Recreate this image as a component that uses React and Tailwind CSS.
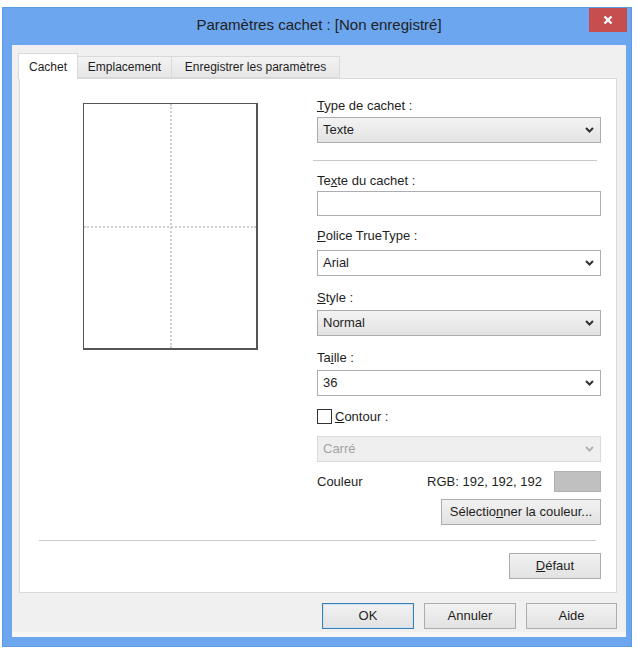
import React from "react";

const font = { fontFamily: '"Liberation Sans", Arial, sans-serif' };

function Chevron({ disabled }) {
  return (
    <svg width="9" height="6" viewBox="0 0 9 6" className="shrink-0">
      <polyline
        points="1,1 4.5,4.5 8,1"
        fill="none"
        stroke={disabled ? "#b4b4b4" : "#333"}
        strokeWidth="2"
      />
    </svg>
  );
}

function Select({ value, variant = "gray", className = "" }) {
  const styles = {
    gray: "bg-gradient-to-b from-[#f3f3f3] to-[#e3e3e3] border-[#acacac] text-[#1e1e1e]",
    white: "bg-white border-[#abadb3] text-[#1e1e1e]",
    disabled: "bg-[#efefef] border-[#d9d9d9] text-[#a3a3a3]",
  };
  return (
    <div
      className={`h-[26px] border flex items-center justify-between pl-[5px] pr-[6px] text-[13px] ${styles[variant]} ${className}`}
    >
      <span>{value}</span>
      <Chevron disabled={variant === "disabled"} />
    </div>
  );
}

function Label({ children, className = "" }) {
  return (
    <div className={`h-[15px] leading-[15px] text-[13px] text-[#1e1e1e] ${className}`}>
      {children}
    </div>
  );
}

function Button({ children, primary, className = "" }) {
  return (
    <div
      className={`h-[26px] flex items-center justify-center text-[13px] text-[#1e1e1e] border bg-gradient-to-b from-[#f2f2f2] to-[#e2e2e2] ${
        primary ? "border-[#3c7fb1] shadow-[inset_0_0_0_1px_#c9e2f5]" : "border-[#acacac]"
      } ${className}`}
    >
      {children}
    </div>
  );
}

export default function App() {
  return (
    <div className="w-[637px] h-[651px] bg-white pt-[7px] pl-[2px]" style={font}>
      <div className="w-[630px] h-[640px] bg-[#6ba6ee] border border-[#5e9ae4] flex flex-col pl-[9px] pr-[5px] pb-[9px]">
        {/* title bar */}
        <div className="h-[37px] relative flex items-center justify-center">
          <span className="text-[15px] text-[#222] pb-[2px]">
            Paramètres cachet : [Non enregistré]
          </span>
          <div className="absolute right-[-1px] top-0 w-[38px] h-[24px] bg-[#c74e4e] flex items-center justify-center">
            <svg width="10" height="10" viewBox="0 0 10 10">
              <path d="M1.5 1.5 L8.5 8.5 M8.5 1.5 L1.5 8.5" stroke="white" strokeWidth="2.4" />
            </svg>
          </div>
        </div>

        {/* client area */}
        <div className="flex-1 bg-[#f0f0f0] border-b-[5px] border-[#f7f7f7] flex flex-col px-[7px] pr-[9px] pt-[8px]">
          {/* tabs */}
          <div className="flex items-end h-[25px] relative z-10">
            <div className="w-[60px] h-[26px] bg-white border border-[#d9d9d9] border-b-0 flex items-center justify-center text-[12px] text-[#1e1e1e] -mb-[1px] ml-[-1px]">
              Cachet
            </div>
            <div className="w-[94px] h-[22px] bg-gradient-to-b from-[#f3f3f3] to-[#e6e6e6] border border-[#d9d9d9] border-l-0 flex items-center justify-center text-[12px] text-[#1e1e1e]">
              Emplacement
            </div>
            <div className="w-[168px] h-[22px] bg-gradient-to-b from-[#f3f3f3] to-[#e6e6e6] border border-[#d9d9d9] border-l-0 flex items-center justify-center text-[12px] text-[#1e1e1e]">
              Enregistrer les paramètres
            </div>
          </div>

          {/* panel */}
          <div className="h-[515px] bg-white border border-[#d9d9d9] flex flex-col">
            <div className="flex">
              {/* preview */}
              <div className="ml-[63px] mt-[24px] w-[175px] h-[247px] border border-[#555] border-r-2 border-b-2 relative">
                <div className="absolute left-[86px] top-0 bottom-0 border-l-2 border-dotted border-[#cfcfcf]" />
                <div className="absolute top-[122px] left-0 right-0 border-t-2 border-dotted border-[#cfcfcf]" />
              </div>

              {/* settings column */}
              <div className="ml-[59px] w-[284px] flex flex-col">
                <Label className="mt-[19px]"><u>T</u>ype de cachet :</Label>
                <Select className="mt-[4px]" value="Texte" />
                <div className="mt-[17px] -ml-[4px] w-[284px] h-[2px] border-t border-[#c8c8c8] border-b border-b-white" />
                <Label className="mt-[11px]">Te<u>x</u>te du cachet :</Label>
                <div className="mt-[3px] h-[25px] bg-white border border-[#abadb3]" />
                <Label className="mt-[12px]"><u>P</u>olice TrueType :</Label>
                <Select className="mt-[7px]" variant="white" value="Arial" />
                <Label className="mt-[14px]"><u>S</u>tyle :</Label>
                <Select className="mt-[5px]" value="Normal" />
                <Label className="mt-[14px]">Ta<u>i</u>lle :</Label>
                <Select className="mt-[5px]" variant="white" value="36" />
                <div className="mt-[13px] flex items-center h-[15px]">
                  <div className="w-[15px] h-[15px] border border-[#333] bg-white" />
                  <span className="ml-[3px] text-[13px] text-[#1e1e1e]"><u>C</u>ontour :</span>
                </div>
                <Select className="mt-[12px]" variant="disabled" value="Carré" />
                <div className="mt-[9px] h-[21px] flex items-center text-[13px] text-[#1e1e1e]">
                  <span>Couleur</span>
                  <span className="ml-auto">RGB: 192, 192, 192</span>
                  <div className="ml-[12px] w-[47px] h-[21px] bg-[#c0c0c0] border border-[#b0b0b0]" />
                </div>
                <Button className="mt-[7px] self-end w-[160px]">
                  Sélectio<u>n</u>ner la couleur...
                </Button>
              </div>
            </div>

            <div className="mt-[15px] ml-[19px] mr-[20px] h-[2px] border-t border-[#c8c8c8] border-b border-b-white" />
            <div className="flex justify-end pr-[15px] mt-[11px]">
              <Button className="w-[92px]">
                <u>D</u>éfaut
              </Button>
            </div>
          </div>

          {/* dialog buttons */}
          <div className="flex justify-end gap-[10px] mt-[10px]">
            <Button primary className="w-[92px]">OK</Button>
            <Button className="w-[92px]">Annuler</Button>
            <Button className="w-[91px]">Aide</Button>
          </div>
        </div>
      </div>
    </div>
  );
}
